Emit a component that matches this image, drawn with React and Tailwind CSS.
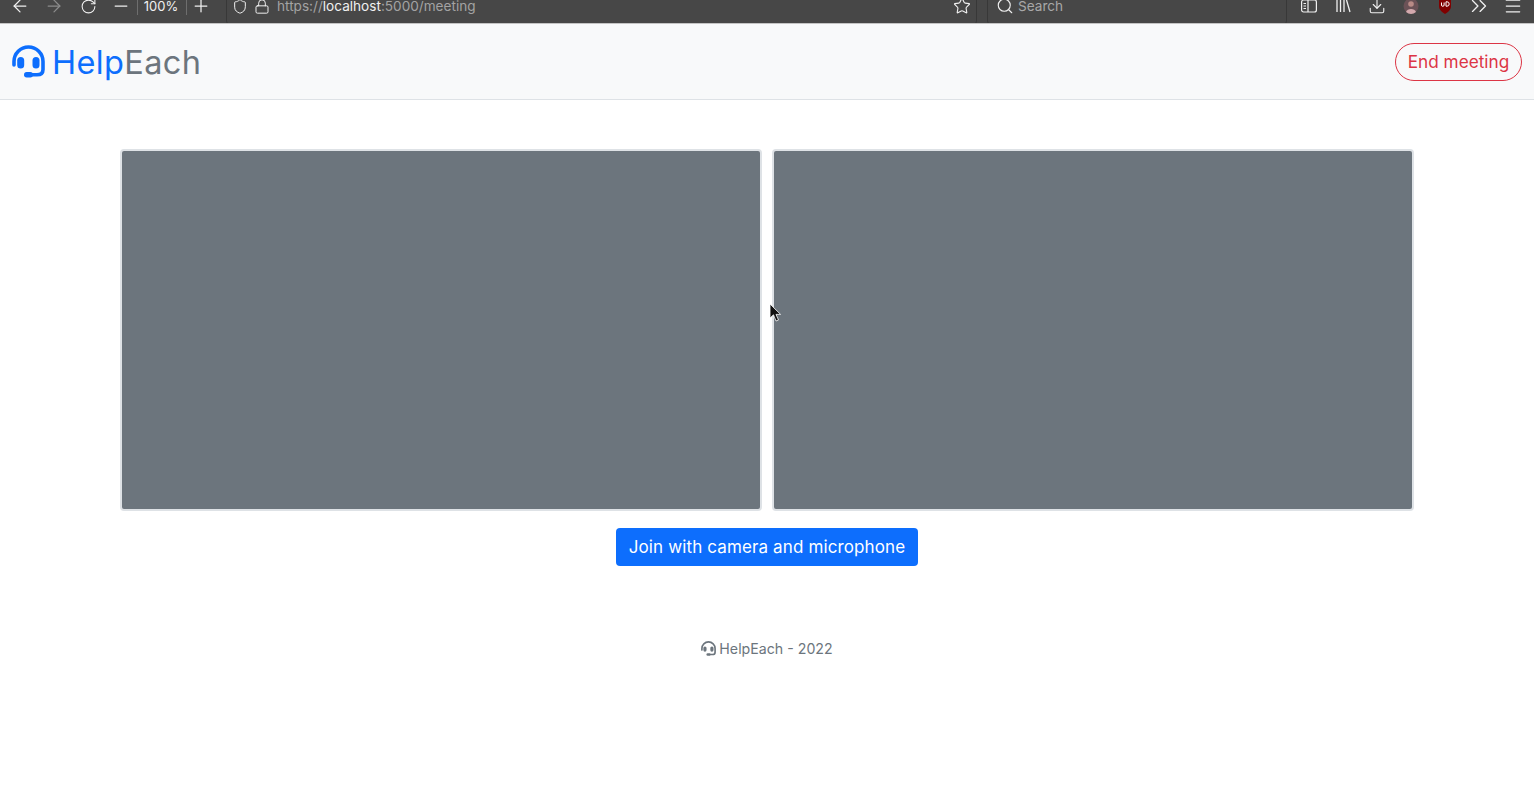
import React from "react";
import { ArrowLeft, ArrowRight, RotateCw, Minus, Plus, Shield, Lock, Star, Search, Download, ChevronsRight, Menu } from "lucide-react";

function Headset({ className }) {
  return (
    <svg viewBox="0 0 33 33" className={className}>
      <path d="M2 20V16.500A14.500 14.500 0 0 1 31 16.500V24.500Q31 29.800 25 29.800H18" fill="none" stroke="currentColor" strokeWidth="3.6" strokeLinecap="round" />
      <rect x="5.200" y="12" width="7" height="11.500" rx="3.500" fill="currentColor" />
      <rect x="20.500" y="12" width="7" height="11.500" rx="3.500" fill="currentColor" />
      <rect x="12" y="27" width="9" height="5.500" rx="2.700" fill="currentColor" />
    </svg>
  );
}

function Slot({ className = "w-[34px]", children }) {
  return <div className={`flex shrink-0 items-center justify-center ${className}`}>{children}</div>;
}

function Toolbar() {
  const ic = { size: 17, strokeWidth: 1.5 };
  return (
    <div className="flex h-6 items-center overflow-hidden border-b border-[#c4c4c4] bg-[#474747] pb-[11px] pl-[3px] text-[#f0f0f0]">
      <Slot><ArrowLeft {...ic} size={20} /></Slot>
      <Slot><ArrowRight {...ic} size={20} className="text-[#8c8c8c]" /></Slot>
      <Slot><RotateCw {...ic} /></Slot>
      <Slot className="w-[32px]"><Minus {...ic} size={20} /></Slot>
      <div className="h-[18px] w-px bg-[#6e6e6e]" />
      <Slot className="w-[48px] pr-[2px] text-[13px] leading-[12px]">100%</Slot>
      <div className="h-[18px] w-px bg-[#6e6e6e]" />
      <Slot className="w-[27px]"><Plus {...ic} size={20} /></Slot>
      <div className="ml-[12px] flex h-[37px] w-[751px] shrink-0 items-center rounded-[4px] border border-[#383838] bg-[#474747] pl-[5px] pr-[5px]">
        <Slot className="w-[16px]"><Shield {...ic} size={21} /></Slot>
        <Slot className="ml-[6px] w-[16px]"><Lock {...ic} /></Slot>
        <span className="ml-[7px] text-[13.600px] leading-[12px] text-[#a3a3a3]">
          https://<span className="text-[#f0f0f0]">localhost</span>:5000/meeting
        </span>
        <Slot className="ml-auto w-[18px]"><Star {...ic} size={18} /></Slot>
      </div>
      <div className="ml-[10px] flex h-[37px] w-[300px] shrink-0 items-center rounded-[4px] border border-[#383838] bg-[#474747] pl-[8px]">
        <Search {...ic} size={18} />
        <span className="ml-[4px] text-[13.600px] leading-[12px] text-[#a8a8a8]">Search</span>
      </div>
      <div className="ml-[5px] flex items-center">
        <Slot>
          <svg width="16" height="14" viewBox="0 0 16 14" fill="none" stroke="currentColor" strokeWidth="1.2">
            <rect x="0.6" y="1" width="14.8" height="12" rx="2" />
            <path d="M7 1v12M2.5 4.5h2.5M2.5 7h2.5M2.5 9.5h2.5" />
          </svg>
        </Slot>
        <Slot>
          <svg width="15" height="14" viewBox="0 0 15 14" fill="none" stroke="currentColor" strokeWidth="1.3">
            <path d="M1 1v12M4.5 1v12M8 1v12M10.5 1l3.5 12" />
          </svg>
        </Slot>
        <Slot><Download {...ic} size={18} /></Slot>
        <Slot>
          <svg width="16" height="16" viewBox="0 0 16 16">
            <circle cx="8" cy="8" r="7.5" fill="#6b5257" />
            <circle cx="8" cy="6" r="2.8" fill="#b98a86" />
            <path d="M3 14c1-4 9-4 10 0a7.5 7.5 0 0 1-10 0z" fill="#d3a9ad" />
          </svg>
        </Slot>
        <Slot>
          <svg width="14" height="16" viewBox="0 0 14 16">
            <path d="M1 0h12v8c0 4-3 6-6 8-3-2-6-4-6-8z" fill="#800000" />
            <path d="M3.5 4.500v2.500a1.300 1.300 0 0 0 2.600 0v-2.500M8 3.800v4.400h1a2.200 2.200 0 0 0 0-4.400z" fill="none" stroke="#fff" strokeWidth="1" />
          </svg>
        </Slot>
        <Slot><ChevronsRight {...ic} size={26} strokeWidth={1.2} /></Slot>
        <Slot><Menu {...ic} size={20} /></Slot>
      </div>
    </div>
  );
}

function Panel() {
  return <div className="h-[362px] w-[642px] rounded-[4px] border-2 border-[#dee2e6] bg-[#6c757d]" />;
}

export default function App() {
  return (
    <div className="relative min-h-[788px] overflow-hidden bg-white font-['Inter','Liberation_Sans',sans-serif]">
      <Toolbar />
      <nav className="flex h-[76px] items-center justify-between border-b border-[#dee2e6] bg-[#f8f9fa] pl-[12px] pr-[12px]">
        <div className="flex items-center">
          <Headset className="h-[33px] w-[33px] text-[#0d6efd]" />
          <span className="ml-[7px] pt-[4px] text-[32.500px] font-normal leading-none tracking-[0.35px]">
            <span className="text-[#0d6efd]">Help</span>
            <span className="text-[#6c757d]">Each</span>
          </span>
        </div>
        <button className="flex h-[38px] w-[127px] items-center justify-center rounded-full border border-[#dc3545] pt-[1px] text-[17.200px] text-[#dc3545]">
          End meeting
        </button>
      </nav>
      <main className="flex flex-col items-center pt-[49px]">
        <div className="flex gap-[10px]">
          <Panel />
          <Panel />
        </div>
        <button className="mt-[17px] flex h-[38px] w-[302px] items-center justify-center rounded-[4px] bg-[#0d6efd] pt-[2px] text-[17px] tracking-[0.13px] text-white">
          Join with camera and microphone
        </button>
        <footer className="mt-[72px] flex h-[21px] items-center text-[14.200px] font-normal text-[#6c757d]">
          <Headset className="h-[15px] w-[15px]" />
          <span className="ml-[3px]">HelpEach - 2022</span>
        </footer>
      </main>
      <svg width="13" height="20" viewBox="0 0 13 20" className="absolute left-[769px] top-[303px]">
        <path d="M1 1v14l3.500-3.200L7 18l2.500-1-2.500-5.600h4.600z" fill="#111" stroke="#fff" strokeWidth="0.8" />
      </svg>
    </div>
  );
}
